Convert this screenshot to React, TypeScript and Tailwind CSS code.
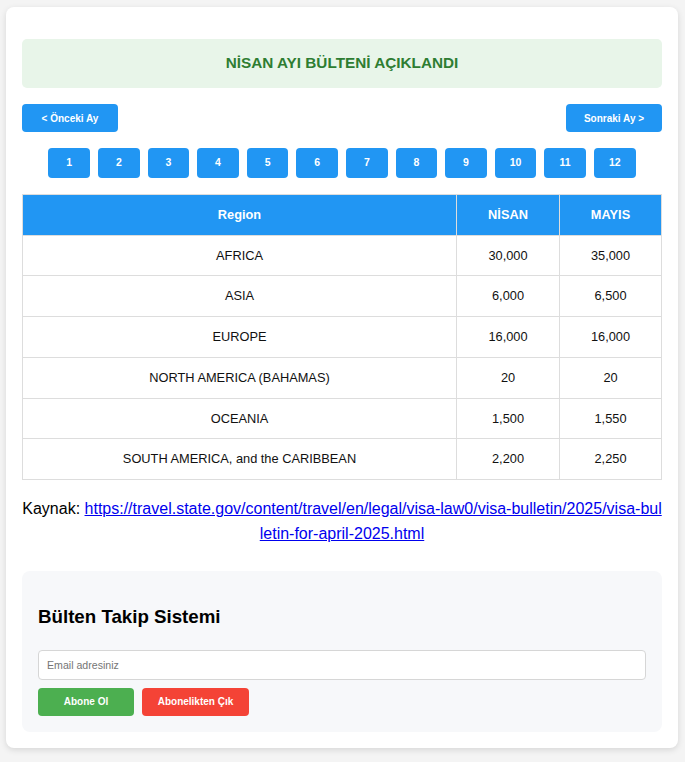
import React from "react";

const rows = [
  ["AFRICA", "30,000", "35,000"],
  ["ASIA", "6,000", "6,500"],
  ["EUROPE", "16,000", "16,000"],
  ["NORTH AMERICA (BAHAMAS)", "20", "20"],
  ["OCEANIA", "1,500", "1,550"],
  ["SOUTH AMERICA, and the CARIBBEAN", "2,200", "2,250"],
];

const months = ["1", "2", "3", "4", "5", "6", "7", "8", "9", "10", "11", "12"];

export default function App() {
  return (
    <div
      className="min-h-[762px] bg-[#f4f4f4] pt-[7px] pb-[14px]"
      style={{ fontFamily: '"Liberation Sans", Arial, sans-serif' }}
    >
      <div className="mx-[6px] w-[672px] rounded-lg bg-white p-4 shadow-[0_2px_6px_rgba(0,0,0,0.12)]">
        <div className="mt-4 rounded-[5px] bg-[#e8f5e9] pt-[15px] pb-[17px] px-4 text-center text-[15.3px] font-bold leading-[17px] text-[#2e7d32]">
          NİSAN AYI BÜLTENİ AÇIKLANDI
        </div>

        <div className="mt-4 flex justify-between">
          <button className="h-[28px] w-[96px] rounded-[4px] bg-[#2196f3] text-[10px] font-bold text-white">
            &lt; Önceki Ay
          </button>
          <button className="h-[28px] w-[96px] rounded-[4px] bg-[#2196f3] text-[10px] font-bold text-white">
            Sonraki Ay &gt;
          </button>
        </div>

        <div className="mt-4 flex justify-center gap-[8px]">
          {months.map((m) => (
            <button
              key={m}
              className="h-[30px] w-[41.6px] rounded-[4px] bg-[#2196f3] text-[10.5px] font-bold text-white"
            >
              {m}
            </button>
          ))}
        </div>

        <table className="mt-4 w-full border-collapse text-[12.8px] text-[#111]">
          <thead>
            <tr className="bg-[#2196f3] text-white">
              <th className="border border-[#ddd] py-3 text-center font-bold leading-[15.7px]">Region</th>
              <th className="w-[103px] border border-[#ddd] py-3 text-center font-bold leading-[15.7px]">NİSAN</th>
              <th className="w-[102px] border border-[#ddd] py-3 text-center font-bold leading-[15.7px]">MAYIS</th>
            </tr>
          </thead>
          <tbody>
            {rows.map((r) => (
              <tr key={r[0]}>
                <td className="border border-[#ddd] py-3 text-center leading-[15.7px]">{r[0]}</td>
                <td className="border border-[#ddd] py-3 text-center leading-[15.7px]">{r[1]}</td>
                <td className="border border-[#ddd] py-3 text-center leading-[15.7px]">{r[2]}</td>
              </tr>
            ))}
          </tbody>
        </table>

        <p className="mt-4 text-center text-[16px] leading-[25px] text-black [word-break:break-all]">
          Kaynak:{" "}
          <a href="#" className="text-[#0000ee] underline">
            https://travel.state.gov/content/travel/en/legal/visa-law0/visa-bulletin/2025/visa-bulletin-for-april-2025.html
          </a>
        </p>

        <div className="mt-[25px] rounded-lg bg-[#f7f8fa] p-4">
          <h3 className="mt-[18px] mb-[22px] text-[18.72px] font-bold leading-[23px] text-black">Bülten Takip Sistemi</h3>
          <input
            type="text"
            placeholder="Email adresiniz"
            className="box-border h-[30px] w-full rounded-[4px] border border-[#d6d6d6] bg-white px-2 text-[10.6px] text-black outline-none placeholder:text-[#757575]"
          />
          <div className="mt-[8px] flex gap-2">
            <button className="h-[28px] w-[96px] rounded-[4px] bg-[#4caf50] text-[10px] font-bold text-white">
              Abone Ol
            </button>
            <button className="h-[28px] w-[107px] rounded-[4px] bg-[#f44336] text-[10px] font-bold text-white">
              Abonelikten Çık
            </button>
          </div>
        </div>
      </div>
    </div>
  );
}
